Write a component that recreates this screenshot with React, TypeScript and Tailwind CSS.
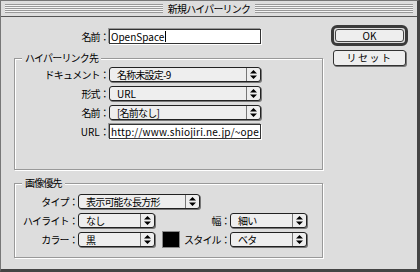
import React from 'react';

function Arrows() {
  return (
    <svg width="7" height="9" viewBox="0 0 7 9">
      <path d="M3.5 0 L7 3.5 L0 3.5 Z M0 5.5 L7 5.5 L3.5 9 Z" fill="#000" />
    </svg>
  );
}

function Popup({ value, className }: { value: React.ReactNode; className: string }) {
  return (
    <div
      className={`flex h-[15px] rounded-[3px] border border-[#222] bg-[#eeeeee] shadow-[1px_1px_0_#777] ${className}`}
    >
      <div className="flex-1 truncate pl-[7px] leading-[13px]">{value}</div>
      <div className="flex w-[14px] items-center justify-center border-l border-[#777]">
        <Arrows />
      </div>
    </div>
  );
}

function Field({ children, className }: { children: React.ReactNode; className: string }) {
  return (
    <div
      className={`flex h-[15px] items-center overflow-hidden whitespace-nowrap border border-[#333] bg-white pl-[1px] leading-[13px] shadow-[-1px_-1px_0_#999,1px_1px_0_#fff] ${className}`}
    >
      {children}
    </div>
  );
}

function Group({ title, className, children }: { title: string; className: string; children: React.ReactNode }) {
  return (
    <div
      className={`relative border border-[#999] shadow-[1px_1px_0_#fff,inset_1px_1px_0_#fff] ${className}`}
    >
      <div className="absolute left-[7px] top-[-8px] bg-[#dddddd] px-[3px] leading-[14px]">{title}</div>
      {children}
    </div>
  );
}

export default function App() {
  return (
    <div className="h-[272px] w-[420px] border-l border-t border-[#777] border-b-[3px] border-r-[3px] border-b-[#444] border-r-[#444] bg-[#dddddd] font-['Noto_Sans_CJK_JP',sans-serif] text-[10px] tracking-[-0.8px] text-black">
      {/* title bar */}
      <div className="flex h-[16px] items-center border-b border-[#555] px-[4px]">
        <div className="h-[9px] flex-1 bg-[repeating-linear-gradient(to_bottom,#999_0,#999_1px,#f4f4f4_1px,#f4f4f4_2px)]" />
        <div className="px-[5px] leading-[14px]">新規ハイパーリンク</div>
        <div className="h-[9px] flex-1 bg-[repeating-linear-gradient(to_bottom,#999_0,#999_1px,#f4f4f4_1px,#f4f4f4_2px)]" />
      </div>

      <div className="flex">
        {/* left column */}
        <div className="ml-[13px] w-[309px]">
          <div className="mt-[12px] flex items-center">
            <div className="w-[95px] text-right">名前：</div>
            <Field className="w-[152px] tracking-normal">
              <span>OpenSpace</span>
              <span className="ml-[1px] h-[11px] w-[1px] bg-black" />
            </Field>
          </div>

          <Group title="ハイパーリンク先" className="mt-[14px] h-[112px] pt-[7px]">
            <div className="flex flex-col gap-[3px]">
              <div className="flex h-[16px] items-center">
                <div className="w-[94px] text-right">ドキュメント：</div>
                <Popup value="名称未設定-9" className="w-[152px]" />
              </div>
              <div className="flex h-[16px] items-center">
                <div className="w-[94px] text-right">形式：</div>
                <Popup value={<span className="tracking-normal">URL</span>} className="w-[152px]" />
              </div>
              <div className="flex h-[16px] items-center">
                <div className="w-[94px] text-right">名前：</div>
                <Popup value="[名前なし]" className="w-[152px]" />
              </div>
              <div className="flex h-[16px] items-center">
                <div className="w-[94px] text-right">
                  <span className="tracking-normal">URL</span>：
                </div>
                <Field className="w-[152px] tracking-[0.2px]">http://www.shiojiri.ne.jp/~ope</Field>
              </div>
            </div>
          </Group>

          <Group title="画像優先" className="mt-[13px] h-[75px] pt-[9px]">
            <div className="flex flex-col gap-[3px]">
              <div className="flex h-[16px] items-center">
                <div className="w-[63px] text-right">タイプ：</div>
                <Popup value="表示可能な長方形" className="w-[122px]" />
              </div>
              <div className="flex h-[16px] items-center">
                <div className="w-[63px] text-right">ハイライト：</div>
                <Popup value="なし" className="w-[77px]" />
                <div className="flex w-[75px] items-center justify-end">幅：</div>
                <Popup value="細い" className="w-[77px]" />
              </div>
              <div className="flex h-[16px] items-center">
                <div className="w-[63px] text-right">カラー：</div>
                <Popup value="黒" className="w-[77px]" />
                <div className="flex w-[75px] items-center">
                  <div className="ml-[7px] h-[17px] w-[18px] border border-[#888] bg-black" />
                  <div className="flex-1 text-right">スタイル：</div>
                </div>
                <Popup value="ベタ" className="w-[77px]" />
              </div>
            </div>
          </Group>
        </div>

        {/* right column */}
        <div className="ml-[8px] mt-[8px] flex flex-col">
          <div className="h-[21px] w-[77px] rounded-[6px] border-[3px] border-[#3a3a3a] p-[1px]">
            <div className="flex h-full items-center justify-center rounded-[3px] border border-[#444] bg-[#eeeeee] leading-[11px] tracking-normal">
              OK
            </div>
          </div>
          <div className="ml-[2px] mt-[4px] flex h-[16px] w-[73px] items-center justify-center rounded-[3px] border border-[#333] bg-[#eeeeee] leading-[14px] tracking-[1.5px] shadow-[1px_1px_0_#777]">
            リセット
          </div>
        </div>
      </div>
    </div>
  );
}
